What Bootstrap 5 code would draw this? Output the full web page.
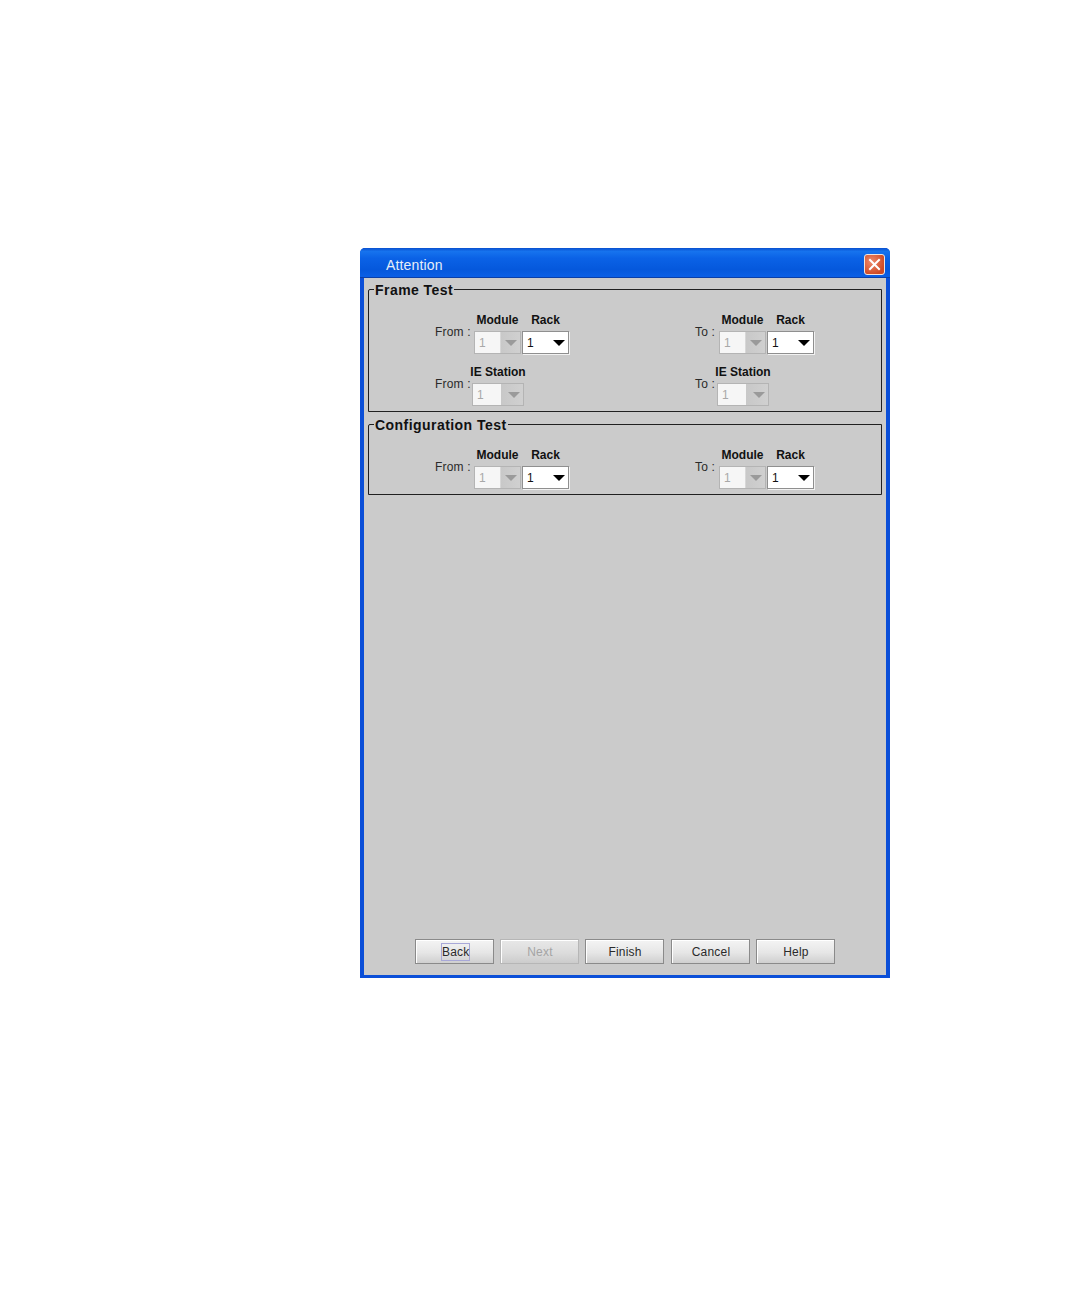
<!DOCTYPE html>
<html lang="en">
<head>
<meta charset="utf-8">
<title>Attention</title>
<link href="https://cdn.jsdelivr.net/npm/bootstrap@5.3.0/dist/css/bootstrap.min.css" rel="stylesheet">
<style>
html,body{background:#fff;font-family:"Liberation Sans",Arial,sans-serif;}
.page-wrap{padding:248px 0 0 360px;}
.xp-window{width:530px;height:730px;background:#0b4fd8;border-radius:5px 5px 0 0;padding:0 4px 3px 4px;}
.xp-title{height:30px;margin:0 -4px;padding:2px 4px 0 26px;color:#e6edf8;font-size:14px;letter-spacing:.15px;border-radius:5px 5px 0 0;
 background:linear-gradient(180deg,#0a50cf 0,#1673ee 12%,#0b62e6 35%,#0558dc 75%,#0a5fe6 100%);border-bottom:1px solid #0a3fa8;}
.title-txt{padding-top:3px;}
.xp-close{width:21px;height:21px;border:1px solid #f0e4de;border-radius:3px;margin-right:1px;margin-top:1px;background:radial-gradient(circle at 35% 35%,#ee8a6c,#cf4a24 75%);}
.xp-body{flex:1 1 auto;background:#cbcbcb;padding:2px 4px 11px 4px;min-height:0;}
.grp{border:1px solid #202020;border-radius:2px 0 0 0;margin:0;width:514px;min-width:0;}
.grp legend{float:none;width:auto;margin:0 0 0 5px;padding:2px 1px 0;font-size:14px;line-height:16px;font-weight:700;letter-spacing:.45px;color:#111;}
.grp-a{height:132px;margin-bottom:3px;}
.grp-b{height:80px;}
.grp-inner{padding:25px 0 0 66px;margin-top:-9px;}
.side-left{flex:0 0 260px;}
.side-right{flex:1 1 auto;}
.sub-row{height:52px;}
.side-lbl{font-size:12px;line-height:14px;color:#2a2a2a;padding-top:11px;letter-spacing:.2px;white-space:nowrap;}
.w-from{width:39px;}.w-from2{width:37px;}
.w-to{width:24px;}.w-to2{width:22px;}
.cell{display:flex;flex-direction:column;align-items:center;}
.cap{font-size:12px;line-height:14px;font-weight:700;color:#111;height:15px;white-space:nowrap;margin-top:-1px;margin-bottom:3px;}
.cw-m{width:47px;margin-right:1px;}.cw-r{width:47px;}.cw-i{width:52px;}
.combo{height:23px;width:100%;display:flex;align-items:center;font-size:12px;padding-left:4px;}
.combo-on{background:#fff;border:1px solid #8f8f8f;box-shadow:1px 1px 0 #f2f2f2;color:#111;}
.combo-off{background:linear-gradient(90deg,#f6f6f6 0,#f6f6f6 56%,#c8c8c8 57%,#d0d0d0 100%);border:1px solid #b4b4b4;color:#a8a8a8;}
.tri{width:0;height:0;margin-left:auto;border-left:6px solid transparent;border-right:6px solid transparent;}
.combo-on .tri{border-top:6px solid #000;margin-right:3px;}
.combo-off .tri{border-top:6px solid #9a9a9a;margin-right:3px;}
.xp-btn.btn{width:79px;height:25px;padding:1px 0 0 1px;font-size:12px;line-height:23px;color:#2a2a2a;border:1px solid #8a8a8a;border-radius:0;letter-spacing:.2px;
 background:linear-gradient(180deg,#f4f4f4 0,#e6e6e6 55%,#cfcfcf 100%);box-shadow:inset 1px 1px 0 #fff;}
.xp-btn.btn:disabled{opacity:1;color:#a4a4a4;border-color:#b6b6b6;background:linear-gradient(180deg,#e8e8e8 0,#dcdcdc 55%,#cccccc 100%);}
.btn-row{gap:6px;}
.btn-cancel{margin-left:1px;}
.fkey{display:inline-block;border:1px solid #a8a8d8;line-height:17px;height:18px;vertical-align:top;margin-top:2px;margin-left:1px;width:29px;}
</style>
</head>
<body>
<div class="page-wrap">
 <div class="xp-window d-flex flex-column">
  <div class="xp-title d-flex align-items-center justify-content-between flex-shrink-0">
   <span class="title-txt">Attention</span>
   <span class="xp-close d-flex align-items-center justify-content-center">
    <svg width="13" height="13" viewBox="0 0 13 13"><path d="M2 2 L11 11 M11 2 L2 11" stroke="#fff" stroke-width="2" stroke-linecap="square"/></svg>
   </span>
  </div>
  <div class="xp-body d-flex flex-column">
   <fieldset class="grp grp-a">
    <legend>Frame Test</legend>
    <div class="grp-inner">
     <div class="sub-row d-flex">
      <div class="side-left d-flex">
       <div class="side-lbl w-from">From :</div>
       <div class="cell cw-m"><div class="cap">Module</div><div class="combo combo-off">1<i class="tri"></i></div></div>
       <div class="cell cw-r"><div class="cap">Rack</div><div class="combo combo-on">1<i class="tri"></i></div></div>
      </div>
      <div class="side-right d-flex">
       <div class="side-lbl w-to">To :</div>
       <div class="cell cw-m"><div class="cap">Module</div><div class="combo combo-off">1<i class="tri"></i></div></div>
       <div class="cell cw-r"><div class="cap">Rack</div><div class="combo combo-on">1<i class="tri"></i></div></div>
      </div>
     </div>
     <div class="sub-row d-flex">
      <div class="side-left d-flex">
       <div class="side-lbl w-from2">From :</div>
       <div class="cell cw-i"><div class="cap">IE Station</div><div class="combo combo-off">1<i class="tri"></i></div></div>
      </div>
      <div class="side-right d-flex">
       <div class="side-lbl w-to2">To :</div>
       <div class="cell cw-i"><div class="cap">IE Station</div><div class="combo combo-off">1<i class="tri"></i></div></div>
      </div>
     </div>
    </div>
   </fieldset>
   <fieldset class="grp grp-b">
    <legend>Configuration Test</legend>
    <div class="grp-inner">
     <div class="sub-row d-flex">
      <div class="side-left d-flex">
       <div class="side-lbl w-from">From :</div>
       <div class="cell cw-m"><div class="cap">Module</div><div class="combo combo-off">1<i class="tri"></i></div></div>
       <div class="cell cw-r"><div class="cap">Rack</div><div class="combo combo-on">1<i class="tri"></i></div></div>
      </div>
      <div class="side-right d-flex">
       <div class="side-lbl w-to">To :</div>
       <div class="cell cw-m"><div class="cap">Module</div><div class="combo combo-off">1<i class="tri"></i></div></div>
       <div class="cell cw-r"><div class="cap">Rack</div><div class="combo combo-on">1<i class="tri"></i></div></div>
      </div>
     </div>
    </div>
   </fieldset>
   <div class="btn-row d-flex justify-content-center mt-auto">
    <button class="btn xp-btn" type="button"><span class="fkey">Back</span></button>
    <button class="btn xp-btn" type="button" disabled>Next</button>
    <button class="btn xp-btn" type="button">Finish</button>
    <button class="btn xp-btn btn-cancel" type="button">Cancel</button>
    <button class="btn xp-btn" type="button">Help</button>
   </div>
  </div>
 </div>
</div>
<script src="https://cdn.jsdelivr.net/npm/bootstrap@5.3.0/dist/js/bootstrap.bundle.min.js"></script>
</body>
</html>
